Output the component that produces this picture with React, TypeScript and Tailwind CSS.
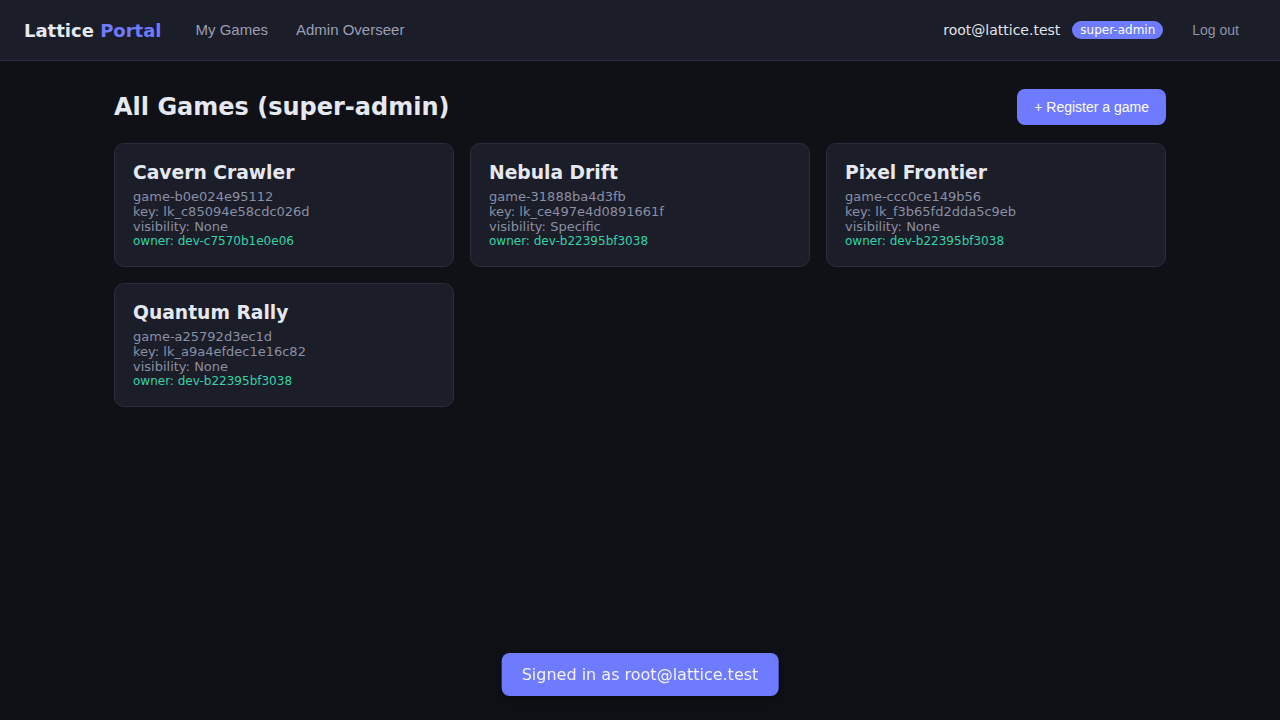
const FONT = "font-['DejaVu_Sans',sans-serif]";
const ARIAL = "font-['Liberation_Sans',Arial,sans-serif]";

type Game = {
  name: string;
  id: string;
  key: string;
  visibility: string;
  owner: string;
};

const GAMES: Game[] = [
  {
    name: "Cavern Crawler",
    id: "game-b0e024e95112",
    key: "lk_c85094e58cdc026d",
    visibility: "None",
    owner: "dev-c7570b1e0e06",
  },
  {
    name: "Nebula Drift",
    id: "game-31888ba4d3fb",
    key: "lk_ce497e4d0891661f",
    visibility: "Specific",
    owner: "dev-b22395bf3038",
  },
  {
    name: "Pixel Frontier",
    id: "game-ccc0ce149b56",
    key: "lk_f3b65fd2dda5c9eb",
    visibility: "None",
    owner: "dev-b22395bf3038",
  },
  {
    name: "Quantum Rally",
    id: "game-a25792d3ec1d",
    key: "lk_a9a4efdec1e16c82",
    visibility: "None",
    owner: "dev-b22395bf3038",
  },
];

function GameCard({ game }: { game: Game }) {
  return (
    <div className="rounded-[10px] border border-[#2a2d3d] bg-[#1b1d29] px-[18px] pt-[18px] pb-[18px]">
      <h3 className="text-[18.72px] leading-[22px] font-bold text-[#e6e8f0]">
        {game.name}
      </h3>
      <div className="mt-[5px] text-[13px] leading-[15px] text-[#8a8fa3]">
        <div>{game.id}</div>
        <div>key: {game.key}</div>
        <div>visibility: {game.visibility}</div>
      </div>
      <div className="text-[12px] leading-[14px] text-[#34d3a6]">
        owner: {game.owner}
      </div>
    </div>
  );
}

export default function App() {
  return (
    <div className={`min-h-[720px] bg-[#101116] ${FONT}`}>
      {/* header */}
      <header className="flex h-[61px] items-center border-b border-[#2a2e45] bg-[#1b1d29] px-6">
        <div className="text-[18px] font-bold text-[#e6e8f0]">
          Lattice <span className="text-[#6e7bff]">Portal</span>
        </div>
        <nav className={`ml-[34px] flex gap-7 text-[15px] text-[#9a9fb5] ${ARIAL}`}>
          <button>My Games</button>
          <button>Admin Overseer</button>
        </nav>
        <div className="ml-auto flex items-center">
          <span className="text-[14px] text-[#e2e4ec]">root@lattice.test</span>
          <span className="ml-3 rounded-full bg-[#6e7bff] px-2 text-[12px] leading-[18px] text-white">
            super-admin
          </span>
          <button className={`ml-[13px] pl-4 pr-[17px] py-1 text-[14px] text-[#8e93a8] ${ARIAL}`}>
            Log out
          </button>
        </div>
      </header>

      {/* main */}
      <main className="mx-auto max-w-[1100px] px-6 pt-7">
        <div className="flex items-center justify-between">
          <h1 className="text-[24px] font-bold text-[#e6e8f0]">
            All Games (super-admin)
          </h1>
          <button
            className={`h-9 rounded-lg bg-[#6e7bff] px-[17px] text-[14px] text-white ${ARIAL}`}
          >
            + Register a game
          </button>
        </div>
        <div className="mt-[18px] grid grid-cols-3 gap-4">
          {GAMES.map((g) => (
            <GameCard key={g.id} game={g} />
          ))}
        </div>
      </main>

      {/* toast */}
      <div className="fixed bottom-6 left-1/2 -translate-x-1/2 rounded-lg bg-[#6e7bff] px-5 py-[10px] text-[16px] leading-[23px] text-[#f2f3ff] shadow-[0_4px_14px_rgba(0,0,0,0.4)]">
        Signed in as root@lattice.test
      </div>
    </div>
  );
}
